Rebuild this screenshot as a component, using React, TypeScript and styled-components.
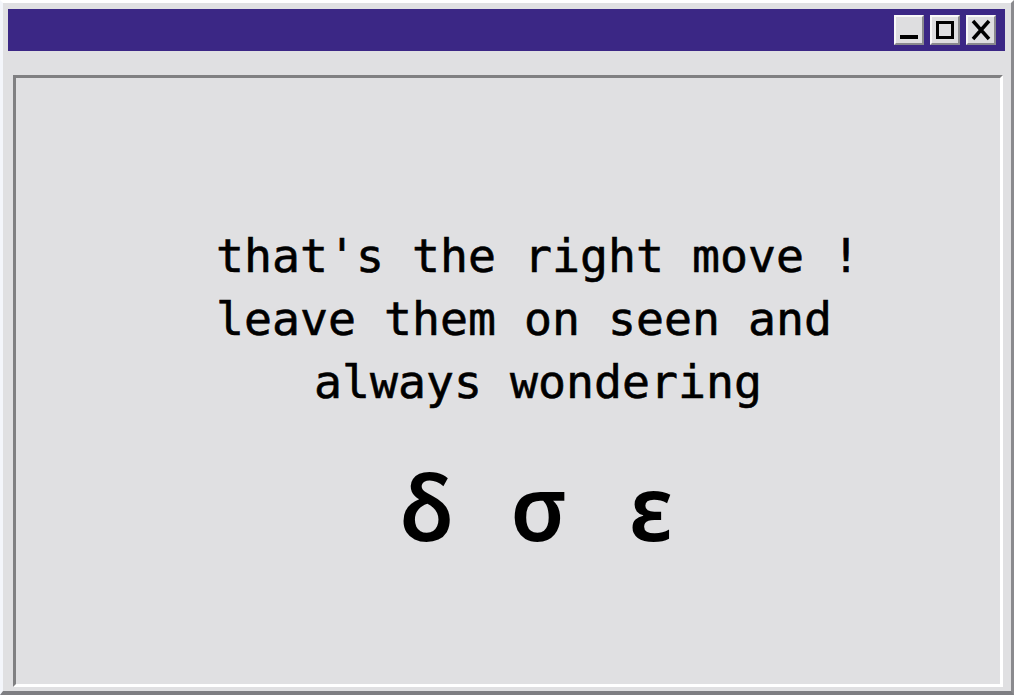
import React from "react";
import styled, { createGlobalStyle } from "styled-components";

const Global = createGlobalStyle`
  html, body { margin: 0; padding: 0; background: #e0e0e2; }
  body { width: 1014px; height: 695px; overflow: hidden; }
`;

const Window = styled.div`
  box-sizing: border-box;
  width: 1014px;
  height: 695px;
  background: #e0e0e2;
  border-top: 3px solid #ffffff;
  border-left: 3px solid #f4f6fb;
  border-right: 3px solid #8a8a8e;
  border-bottom: 4px solid #7e7e82;
  padding: 6px 6px 4px 5px;
  display: flex;
  flex-direction: column;
`;

const TitleBar = styled.div`
  height: 42px;
  background: #3b2785;
  display: flex;
  align-items: center;
  justify-content: flex-end;
  gap: 6px;
  padding-right: 9px;
  box-sizing: border-box;
  flex-shrink: 0;
`;

const TitleButton = styled.button`
  box-sizing: border-box;
  width: 30px;
  height: 30px;
  padding: 0;
  background: #dedee0;
  border-top: 2px solid #f8f8f8;
  border-left: 2px solid #f8f8f8;
  border-right: 2px solid #8a8a8e;
  border-bottom: 2px solid #8a8a8e;
  display: flex;
  align-items: center;
  justify-content: center;
  cursor: pointer;
`;

const Panel = styled.div`
  box-sizing: border-box;
  flex: 1;
  margin: 24px 2px 0 5px;
  background: #e0e0e2;
  border-top: 3px solid #808082;
  border-left: 3px solid #808082;
  border-right: 3px solid #ffffff;
  border-bottom: 3px solid #ffffff;
  display: flex;
  flex-direction: column;
  align-items: center;
  padding-top: 147px;
  padding-left: 60px;
`;

const Message = styled.div`
  font-family: "DejaVu Sans Mono", "Liberation Mono", monospace;
  font-size: 46.5px;
  line-height: 63px;
  color: #000;
  text-align: center;
  white-space: pre;
  -webkit-text-stroke: 0.6px #000;
`;

const Line = styled.div``;

const Greek = styled.div`
  display: flex;
  justify-content: center;
  margin-top: 37px;
  margin-left: 2px;
`;

const Letter = styled.span`
  width: 112px;
  text-align: center;
  font-family: "Noto Sans", "Open Sans", sans-serif;
  font-size: 90px;
  font-weight: 600;
  line-height: 110px;
  color: #000;
`;

export default function App() {
  return (
    <>
      <Global />
      <Window>
        <TitleBar>
          <TitleButton aria-label="minimize">
            <svg width="26" height="26" viewBox="0 0 26 26">
              <rect x="4" y="18" width="18" height="4" fill="#000" />
            </svg>
          </TitleButton>
          <TitleButton aria-label="maximize">
            <svg width="26" height="26" viewBox="0 0 26 26">
              <rect x="5.5" y="5.5" width="15" height="15" fill="none" stroke="#000" strokeWidth="3" />
            </svg>
          </TitleButton>
          <TitleButton aria-label="close">
            <svg width="26" height="26" viewBox="0 0 26 26">
              <path d="M5 4 L21 22 M21 4 L5 22" stroke="#000" strokeWidth="3.5" />
            </svg>
          </TitleButton>
        </TitleBar>
        <Panel>
          <Message>
            <Line>that's the right move !</Line>
            <Line>{"leave them on seen and "}</Line>
            <Line>always wondering</Line>
          </Message>
          <Greek>
            <Letter>δ</Letter>
            <Letter>σ</Letter>
            <Letter>ε</Letter>
          </Greek>
        </Panel>
      </Window>
    </>
  );
}
